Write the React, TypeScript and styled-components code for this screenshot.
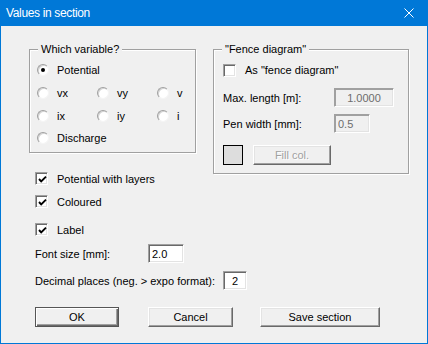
import React from 'react';
import styled, { createGlobalStyle } from 'styled-components';

const GlobalStyle = createGlobalStyle`
  html, body {
    margin: 0;
    padding: 0;
    background: #f0f0f0;
  }
  body {
    font-family: 'Liberation Sans', Arial, sans-serif;
    font-size: 11px;
    color: #000;
  }
`;

const Window = styled.div`
  width: 428px;
  height: 344px;
  box-sizing: border-box;
  border: 1px solid #0078d7;
  border-top: none;
  background: #f0f0f0;
  display: flex;
  flex-direction: column;
`;

const TitleBar = styled.div`
  height: 26px;
  flex: none;
  background: #0078d7;
  color: #fff;
  display: flex;
  align-items: center;
  justify-content: space-between;
  padding: 0 13px 0 5px;
  font-size: 12px;
  letter-spacing: -0.35px;
`;

const Body = styled.div`
  flex: 1;
  padding: 23px 0 0 28px;
`;

const Columns = styled.div`
  display: grid;
  grid-template-columns: 167px 196px;
  column-gap: 17px;
  align-items: start;
`;

const LeftColumn = styled.div`
  display: flex;
  flex-direction: column;
`;

const GroupBox = styled.div<{ $padLeft: number }>`
  position: relative;
  border: 1px solid #a0a0a0;
  box-shadow: inset 1px 1px 0 #fff, 1px 1px 0 #fff;
  padding: 9px 0 3px ${p => p.$padLeft}px;
`;

const GroupTitle = styled.span`
  position: absolute;
  top: -7px;
  left: 8px;
  padding: 0 3px;
  background: #f0f0f0;
  line-height: 13px;
`;

const RadioGrid = styled.div`
  display: grid;
  grid-template-columns: 60px 60px 40px;
  grid-template-rows: 22px 23px 23px 22px;
`;

const Option = styled.label<{ $span?: boolean }>`
  display: flex;
  align-items: center;
  white-space: nowrap;
  grid-column: ${p => (p.$span ? '1 / -1' : 'auto')};
`;

const Radio = styled.span<{ $checked?: boolean }>`
  position: relative;
  flex: none;
  width: 12px;
  height: 12px;
  box-sizing: border-box;
  border-radius: 50%;
  border: 1px solid;
  border-color: #a0a0a0 #f4f4f4 #f4f4f4 #a0a0a0;
  background: #fff;
  box-shadow: inset 1px 1px 0 #d4d4d4;
  margin-right: 8px;

  &::after {
    content: '';
    display: ${p => (p.$checked ? 'block' : 'none')};
    position: absolute;
    left: 3px;
    top: 3px;
    width: 4px;
    height: 4px;
    border-radius: 50%;
    background: #000;
  }
`;

const Box = styled.span`
  position: relative;
  flex: none;
  width: 13px;
  height: 13px;
  box-sizing: border-box;
  border: 1px solid;
  border-color: #a0a0a0 #fff #fff #a0a0a0;
  box-shadow: inset 1px 1px 0 #696969, inset -1px -1px 0 #e3e3e3;
  background: #fff;
  margin-right: 9px;

  svg {
    position: absolute;
    left: 1px;
    top: 1px;
  }
`;

const CheckList = styled.div<{ $top: number }>`
  display: flex;
  flex-direction: column;
  margin-top: ${p => p.$top}px;
  padding-left: 6px;
`;

const CheckRow = styled(Option)`
  height: 23px;
`;

const FieldRow = styled.div<{ $top: number; $labelWidth: number }>`
  display: flex;
  align-items: center;
  height: 19px;
  margin-top: ${p => p.$top}px;
  white-space: nowrap;

  & > span {
    width: ${p => p.$labelWidth}px;
    flex: none;
  }
`;

const LeftFieldRow = styled(FieldRow)`
  padding-left: 6px;
`;

const Field = styled.input<{ $width: number; $center?: boolean }>`
  width: ${p => p.$width}px;
  height: 19px;
  box-sizing: border-box;
  margin: 0;
  border: 1px solid;
  border-color: #a0a0a0 #fff #fff #a0a0a0;
  box-shadow: inset 1px 1px 0 #696969, inset -1px -1px 0 #e3e3e3;
  background: #fff;
  color: #000;
  font: inherit;
  padding: 0 3px;
  text-align: ${p => (p.$center ? 'center' : 'left')};
  outline: none;

  &:disabled {
    background: #f0f0f0;
    color: #6d6d6d;
    box-shadow: inset 1px 1px 0 #a0a0a0, inset -1px -1px 0 #e3e3e3;
  }
`;

const FenceRows = styled.div`
  display: flex;
  flex-direction: column;
  padding-bottom: 5px;
`;

const FenceCheck = styled(Option)`
  height: 22px;
`;

const ColorRow = styled.div`
  display: flex;
  align-items: center;
  gap: 10px;
  margin-top: 12px;
`;

const Swatch = styled.span`
  width: 20px;
  height: 20px;
  box-sizing: border-box;
  border: 1px solid #000;
  background: #dddddd;
`;

const Button = styled.button<{ $width: number; $default?: boolean }>`
  width: ${p => p.$width}px;
  height: 20px;
  box-sizing: border-box;
  margin: 0;
  padding: 0;
  font: inherit;
  background: #f0f0f0;
  color: #000;
  border: 1px solid;
  border-color: ${p => (p.$default ? '#555' : '#fff #696969 #696969 #fff')};
  box-shadow: ${p =>
    p.$default
      ? 'inset 1px 1px 0 #fff, inset -1px -1px 0 #696969, inset -2px -2px 0 #a0a0a0'
      : 'inset -1px -1px 0 #a0a0a0, inset 1px 1px 0 #e3e3e3'};

  &:disabled {
    color: #a0a0a0;
    text-shadow: 1px 1px 0 #fff;
  }
`;

const ButtonRow = styled.div`
  display: flex;
  margin-top: 17px;
  padding-left: 6px;
`;

const Spacer = styled.span<{ $w: number }>`
  width: ${p => p.$w}px;
  flex: none;
`;

const Tick = () => (
  <svg width="11" height="11" viewBox="0 0 11 11">
    <path d="M2 5 L4.2 7.4 L9 2.6" fill="none" stroke="#000" strokeWidth="1.9" />
  </svg>
);

const CloseIcon = () => (
  <svg width="10" height="10" viewBox="0 0 10 10">
    <path d="M0.5 0.5 L9.5 9.5 M9.5 0.5 L0.5 9.5" stroke="#fff" strokeWidth="1" />
  </svg>
);

const Check: React.FC<{ checked?: boolean }> = ({ checked }) => (
  <Box>{checked && <Tick />}</Box>
);

export default function App() {
  return (
    <>
      <GlobalStyle />
      <Window>
        <TitleBar>
          <span>Values in section</span>
          <CloseIcon />
        </TitleBar>
        <Body>
          <Columns>
            <LeftColumn>
              <GroupBox $padLeft={7}>
                <GroupTitle>Which variable?</GroupTitle>
                <RadioGrid>
                  <Option $span><Radio $checked />Potential</Option>
                  <Option><Radio />vx</Option>
                  <Option><Radio />vy</Option>
                  <Option><Radio />v</Option>
                  <Option><Radio />ix</Option>
                  <Option><Radio />iy</Option>
                  <Option><Radio />i</Option>
                  <Option $span><Radio />Discharge</Option>
                </RadioGrid>
              </GroupBox>
              <CheckList $top={14}>
                <CheckRow><Check checked />Potential with layers</CheckRow>
                <CheckRow><Check checked />Coloured</CheckRow>
              </CheckList>
              <CheckList $top={5}>
                <CheckRow><Check checked />Label</CheckRow>
              </CheckList>
              <LeftFieldRow $top={3} $labelWidth={113}>
                <span>Font size [mm]:</span>
                <Field $width={36} defaultValue="2.0" />
              </LeftFieldRow>
              <LeftFieldRow $top={8} $labelWidth={188}>
                <span>Decimal places (neg. &gt; expo format):</span>
                <Field $width={24} $center defaultValue="2" />
              </LeftFieldRow>
            </LeftColumn>
            <GroupBox $padLeft={9}>
              <GroupTitle>"Fence diagram"</GroupTitle>
              <FenceRows>
                <FenceCheck><Check />As "fence diagram"</FenceCheck>
                <FieldRow $top={7} $labelWidth={111}>
                  <span>Max. length [m]:</span>
                  <Field $width={60} $center disabled defaultValue="1.0000" />
                </FieldRow>
                <FieldRow $top={7} $labelWidth={111}>
                  <span>Pen width [mm]:</span>
                  <Field $width={36} disabled defaultValue="0.5" />
                </FieldRow>
                <ColorRow>
                  <Swatch />
                  <Button $width={78} disabled>Fill col.</Button>
                </ColorRow>
              </FenceRows>
            </GroupBox>
          </Columns>
          <ButtonRow>
            <Button $width={84} $default>OK</Button>
            <Spacer $w={29} />
            <Button $width={85}>Cancel</Button>
            <Spacer $w={27} />
            <Button $width={120}>Save section</Button>
          </ButtonRow>
        </Body>
      </Window>
    </>
  );
}
